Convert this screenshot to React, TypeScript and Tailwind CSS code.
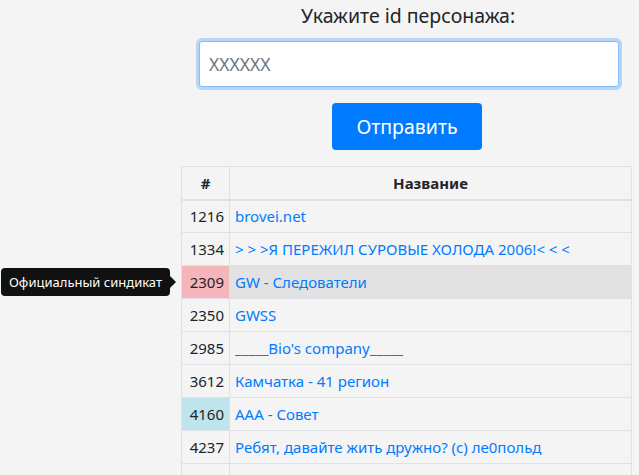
const rows: { id: number; name: string; cell?: string; row?: string; tip?: string }[] = [
  { id: 1216, name: "brovei.net" },
  { id: 1334, name: "> > >Я ПЕРЕЖИЛ СУРОВЫЕ ХОЛОДА 2006!< < <" },
  { id: 2309, name: "GW - Следователи", cell: "bg-[#f5b5bb]", row: "bg-[#e2e2e2]", tip: "Официальный синдикат" },
  { id: 2350, name: "GWSS" },
  { id: 2985, name: "_____Bio's company_____" },
  { id: 3612, name: "Камчатка - 41 регион" },
  { id: 4160, name: "AAA - Совет", cell: "bg-[#bee5eb]" },
  { id: 4237, name: "Ребят, давайте жить дружно? (c) ле0польд" },
  { id: 0, name: "" },
];

export default function App() {
  return (
    <div className="h-[475px] overflow-hidden bg-[#f4f4f4] text-[#212529] font-['Noto_Sans',sans-serif]">
      <div className="ml-[181px] w-[451px] flex flex-col items-center">
        <h2 className="mt-[3px] text-[19.5px] leading-[26px] ml-[3px]">Укажите id персонажа:</h2>
        <input
          className="mt-[12px] ml-[5px] w-[420px] h-[46px] bg-white border border-[#80bdff] rounded-[3px] px-[9px] text-[17.5px] outline-none shadow-[0_0_0_3px_rgba(0,123,255,0.25)] placeholder:text-[#6c757d]"
          placeholder="XXXXXX"
        />
        <button className="mt-[16px] ml-[1px] w-[150px] h-[47px] rounded-[4px] bg-[#007bff] text-white text-[19.5px]">
          Отправить
        </button>
        <table className="mt-[16px] w-full border-collapse text-[15px]">
          <thead>
            <tr className="h-[33px]">
              <th className="w-[48px] border border-[#dee2e6] border-b-2 font-bold text-center">#</th>
              <th className="border border-[#dee2e6] border-b-2 font-bold text-center">Название</th>
            </tr>
          </thead>
          <tbody>
            {rows.map((r, i) => (
              <tr key={i} className={`h-[33px] ${r.row ?? ""}`}>
                <td className={`relative border border-[#dee2e6] text-right px-[5px] ${r.cell ?? ""}`}>
                  {r.id ? r.id : ""}
                  {r.tip && (
                    <div className="absolute right-[53px] top-[2px] flex items-center">
                      <div className="whitespace-nowrap bg-[#111] text-white text-[13px] leading-[20px] px-[8px] py-[4px] rounded-[4px]">
                        {r.tip}
                      </div>
                      <div className="w-0 h-0 border-y-[6px] border-y-transparent border-l-[6px] border-l-[#111]" />
                    </div>
                  )}
                </td>
                <td className="border border-[#dee2e6] px-[5px] text-[#007bff] whitespace-nowrap">{r.name}</td>
              </tr>
            ))}
          </tbody>
        </table>
      </div>
    </div>
  );
}
